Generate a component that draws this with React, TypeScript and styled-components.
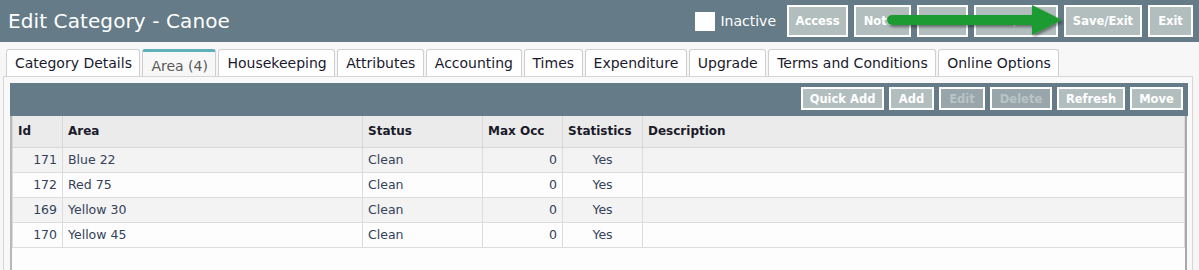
import React from "react";
import styled, { createGlobalStyle } from "styled-components";

const Global = createGlobalStyle`
  html, body { margin: 0; padding: 0; background: #f7f7f7; }
  body { font-family: "DejaVu Sans", Verdana, sans-serif; overflow: hidden; }
  * { box-sizing: border-box; }
`;

const Page = styled.div`
  width: 1199px;
  height: 270px;
  display: flex;
  flex-direction: column;
`;

const Header = styled.header`
  position: relative;
  height: 42px;
  background: #657b88;
  display: flex;
  align-items: center;
  justify-content: space-between;
  padding: 0 6px 0 8px;
`;

const Title = styled.h1`
  margin: 0;
  color: #fff;
  font-size: 20px;
  font-weight: normal;
  letter-spacing: 0.1px;
`;

const HeaderRight = styled.div`
  display: flex;
  align-items: center;
  gap: 6px;
`;

const Check = styled.span`
  width: 20px;
  height: 19px;
  background: #fff;
  display: inline-block;
`;

const CheckLabel = styled.span`
  color: #fff;
  font-size: 14px;
  margin: 0 5px 0 -1px;
`;

const HeadButton = styled.button<{ $w: number }>`
  width: ${(p) => p.$w}px;
  height: 32px;
  background: #b2bebe;
  border: 2px solid #fff;
  color: #fff;
  font-family: "DejaVu Sans", Verdana, sans-serif;
  font-weight: bold;
  font-size: 11.5px;
  padding: 0;
`;

const Arrow = styled.svg`
  position: absolute;
  left: 880px;
  top: 2px;
`;

const Tabs = styled.nav`
  display: flex;
  gap: 2px;
  height: 34px;
  padding: 7px 0 0 6px;
`;

const Tab = styled.div<{ $active?: boolean }>`
  height: 27px;
  padding: 0 7.5px 0 8px;
  display: flex;
  align-items: center;
  font-size: 14px;
  color: ${(p) => (p.$active ? "#5a5a5a" : "#1a1a2e")};
  background: ${(p) => (p.$active ? "#f7f7f7" : "#fff")};
  border: 1px solid #cfcfcf;
  border-top: ${(p) => (p.$active ? "3px solid #5fb0ba" : "1px solid #cfcfcf")};
  border-bottom: none;
  border-radius: 3px 3px 0 0;
  padding-top: ${(p) => (p.$active ? "3px" : "0")};
`;

const Panel = styled.section`
  flex: 1;
  margin: 0 6px 0 3px;
  border: 1px solid #d6d6d6;
  border-bottom: none;
  background: #f9f9f9;
  padding: 6px 4px 0 6px;
  display: flex;
  flex-direction: column;
`;

const Toolbar = styled.div`
  height: 33px;
  background: #657b88;
  display: flex;
  align-items: center;
  justify-content: flex-end;
  gap: 5px;
  padding: 0 5px 2px 0;
`;

const ToolButton = styled.button<{ $w: number; $disabled?: boolean }>`
  width: ${(p) => p.$w}px;
  height: 23px;
  background: ${(p) => (p.$disabled ? "#98a6ab" : "#b2bebe")};
  border: 2px solid #fff;
  color: ${(p) => (p.$disabled ? "#b9c4c6" : "#fff")};
  font-family: "DejaVu Sans", Verdana, sans-serif;
  font-weight: bold;
  font-size: 11.5px;
  padding: 0;
`;

const GridWrap = styled.div`
  flex: 1;
  margin-right: 1px;
  background: #fdfdfd;
  border-left: 2px solid #b9b9b9;
  border-right: 2px solid #a9a9a9;
`;

const Table = styled.table`
  width: 100%;
  border-collapse: collapse;
  table-layout: fixed;
  font-size: 12.5px;
`;

const Th = styled.th<{ $w?: number }>`
  ${(p) => (p.$w ? `width: ${p.$w}px;` : "")}
  height: 31px;
  background: #ebebeb;
  text-align: left;
  padding: 0 5px;
  color: #1a1a2a;
  font-size: 12px;
  font-weight: bold;
  border: 1px solid #d8d8d8;
  border-top: none;
`;

const Tr = styled.tr<{ $alt?: boolean }>`
  background: ${(p) => (p.$alt ? "#f3f3f3" : "#fdfdfd")};
`;

const Td = styled.td<{ $align?: string }>`
  height: 25px;
  padding: 0 5px;
  color: #33425a;
  text-align: ${(p) => p.$align || "left"};
  border: 1px solid #dcdcdc;
  border-top: none;
  white-space: nowrap;
`;

const headButtons = [
  { t: "Access", w: 61 },
  { t: "Notes", w: 57 },
  { t: "Save", w: 51 },
  { t: "Save/Copy", w: 84 },
  { t: "Save/Exit", w: 78 },
  { t: "Exit", w: 45 },
];

const tabs = [
  "Category Details",
  "Area (4)",
  "Housekeeping",
  "Attributes",
  "Accounting",
  "Times",
  "Expenditure",
  "Upgrade",
  "Terms and Conditions",
  "Online Options",
];

const rows = [
  { id: 171, area: "Blue 22" },
  { id: 172, area: "Red 75" },
  { id: 169, area: "Yellow 30" },
  { id: 170, area: "Yellow 45" },
];

export default function App() {
  return (
    <Page>
      <Global />
      <Header>
        <Title>Edit Category - Canoe</Title>
        <HeaderRight>
          <Check />
          <CheckLabel>Inactive</CheckLabel>
          {headButtons.map((b) => (
            <HeadButton key={b.t} $w={b.w}>
              {b.t}
            </HeadButton>
          ))}
        </HeaderRight>
        <Arrow width="190" height="40" viewBox="0 0 190 40">
          <defs>
            <filter id="sh" x="-10%" y="-30%" width="130%" height="180%">
              <feDropShadow dx="1.5" dy="2" stdDeviation="1.5" floodColor="#000" floodOpacity="0.45" />
            </filter>
          </defs>
          <g filter="url(#sh)">
            <line x1="12" y1="18" x2="155" y2="18" stroke="#1f9b32" strokeWidth="10" strokeLinecap="round" />
            <polygon points="152,3 182,18 152,33" fill="#1f9b32" />
          </g>
        </Arrow>
      </Header>
      <Tabs>
        {tabs.map((t, i) => (
          <Tab key={t} $active={i === 1}>
            {t}
          </Tab>
        ))}
      </Tabs>
      <Panel>
        <Toolbar>
          <ToolButton $w={83}>Quick Add</ToolButton>
          <ToolButton $w={45}>Add</ToolButton>
          <ToolButton $w={46} $disabled>Edit</ToolButton>
          <ToolButton $w={62} $disabled>Delete</ToolButton>
          <ToolButton $w={68}>Refresh</ToolButton>
          <ToolButton $w={53}>Move</ToolButton>
        </Toolbar>
        <GridWrap>
          <Table>
            <thead>
              <tr>
                <Th $w={50}>Id</Th>
                <Th $w={300}>Area</Th>
                <Th $w={120}>Status</Th>
                <Th $w={80}>Max Occ</Th>
                <Th $w={80}>Statistics</Th>
                <Th>Description</Th>
              </tr>
            </thead>
            <tbody>
              {rows.map((r, i) => (
                <Tr key={r.id} $alt={i % 2 === 0}>
                  <Td $align="right">{r.id}</Td>
                  <Td>{r.area}</Td>
                  <Td>Clean</Td>
                  <Td $align="right">0</Td>
                  <Td $align="center">Yes</Td>
                  <Td />
                </Tr>
              ))}
            </tbody>
          </Table>
        </GridWrap>
      </Panel>
    </Page>
  );
}
